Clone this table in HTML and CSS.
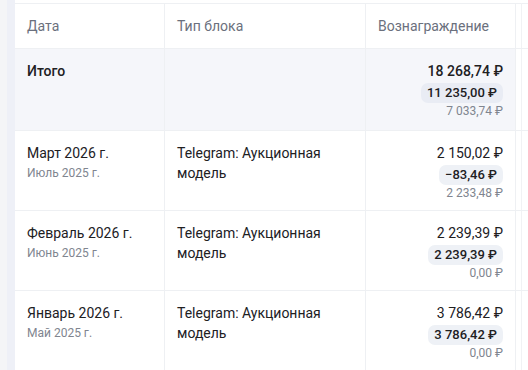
FILE: index.html
```html
<!DOCTYPE html>
<html lang="ru">
<head>
<meta charset="utf-8">
<link rel="stylesheet" href="styles.css">
</head>
<body>
<div class="page">
  <div class="stripe-a"></div>
  <div class="stripe-b"></div>
  <div class="wrap">
    <table class="tbl">
      <thead>
        <tr>
          <th class="c1">Дата</th>
          <th class="c2">Тип блока</th>
          <th class="c3">Вознаграждение</th>
          <th class="c4"></th>
          <th class="c5"></th>
        </tr>
      </thead>
      <tbody>
        <tr class="total">
          <td class="c1"><b>Итого</b></td>
          <td class="c2"></td>
          <td class="c3 num">
            <div class="amt bold">18&nbsp;268,74&nbsp;₽</div>
            <div class="badge-row"><span class="badge">11&nbsp;235,00&nbsp;₽</span></div>
            <div class="sub">7&nbsp;033,74&nbsp;₽</div>
          </td>
          <td class="c4"></td>
          <td class="c5"></td>
        </tr>
        <tr>
          <td class="c1"><div class="date">Март 2026 г.</div><div class="sub">Июль 2025 г.</div></td>
          <td class="c2">Telegram: Аукционная модель</td>
          <td class="c3 num">
            <div class="amt">2&nbsp;150,02&nbsp;₽</div>
            <div class="badge-row"><span class="badge">−83,46&nbsp;₽</span></div>
            <div class="sub">2&nbsp;233,48&nbsp;₽</div>
          </td>
          <td class="c4"></td>
          <td class="c5"></td>
        </tr>
        <tr>
          <td class="c1"><div class="date">Февраль 2026 г.</div><div class="sub">Июнь 2025 г.</div></td>
          <td class="c2">Telegram: Аукционная модель</td>
          <td class="c3 num">
            <div class="amt">2&nbsp;239,39&nbsp;₽</div>
            <div class="badge-row"><span class="badge">2&nbsp;239,39&nbsp;₽</span></div>
            <div class="sub">0,00&nbsp;₽</div>
          </td>
          <td class="c4"></td>
          <td class="c5"></td>
        </tr>
        <tr>
          <td class="c1"><div class="date">Январь 2026 г.</div><div class="sub">Май 2025 г.</div></td>
          <td class="c2">Telegram: Аукционная модель</td>
          <td class="c3 num">
            <div class="amt">3&nbsp;786,42&nbsp;₽</div>
            <div class="badge-row"><span class="badge">3&nbsp;786,42&nbsp;₽</span></div>
            <div class="sub">0,00&nbsp;₽</div>
          </td>
          <td class="c4"></td>
          <td class="c5"></td>
        </tr>
      </tbody>
    </table>
  </div>
</div>
</body>
</html>
```

FILE: styles.css
```css
html, body {
  margin: 0;
  padding: 0;
  background: #ffffff;
}
body {
  font-family: "Roboto", "Noto Sans", sans-serif;
  font-size: 14px;
  color: #21201f;
  width: 528px;
  height: 370px;
  overflow: hidden;
}
.page {
  display: flex;
  height: 370px;
}
.stripe-a {
  width: 7px;
  flex: none;
  background: #f4f5f7;
}
.stripe-b {
  width: 8px;
  flex: none;
  background: #eef0f7;
}
.wrap {
  flex: 1;
  padding-top: 3px;
  overflow: hidden;
}
.tbl {
  border-collapse: collapse;
  table-layout: fixed;
  width: 513px;
  border-top: 1px solid #eef0f3;
}
.tbl th, .tbl td {
  padding: 12px 12px 9px;
  text-align: left;
  vertical-align: top;
  line-height: 20px;
  border-bottom: 1px solid #eef0f3;
}
.tbl th {
  font-weight: 400;
  color: #6b707d;
  padding-top: 12px;
  padding-bottom: 12px;
  height: 20px;
}
.c1 { width: 125px; border-right: 1px solid #eef0f3; }
.c2 { width: 176px; border-right: 1px solid #eef0f3; }
.c3 { width: 125px; border-right: 1px solid #eef0f3; }
.tbl .c4 { width: 5px; padding: 0; border-right: 1px solid #f1f2f4; }
.tbl .c5 { padding: 0; }
.num { text-align: right !important; }
.total td {
  background: #f5f6fa;
  padding-top: 12px;
  padding-bottom: 11px;
}
.total .c4, .total .c5 { background: #ffffff; }
.tbl td { height: 57px; }
.tbl .total td { height: 57px; }
b, .bold { font-weight: 500; }
.amt { line-height: 20px; }
.badge-row { margin-top: 1px; line-height: 20px; }
.badge {
  display: inline-block;
  background: #eef1f6;
  border-radius: 7px;
  padding: 0 6px;
  font-size: 13px;
  font-weight: 500;
  line-height: 20px;
}
.total .badge { background: #e9ecf4; }
.sub {
  font-size: 12px;
  color: #80858f;
  line-height: 16px;
}
.date { line-height: 20px; margin-bottom: 2px; }
```
